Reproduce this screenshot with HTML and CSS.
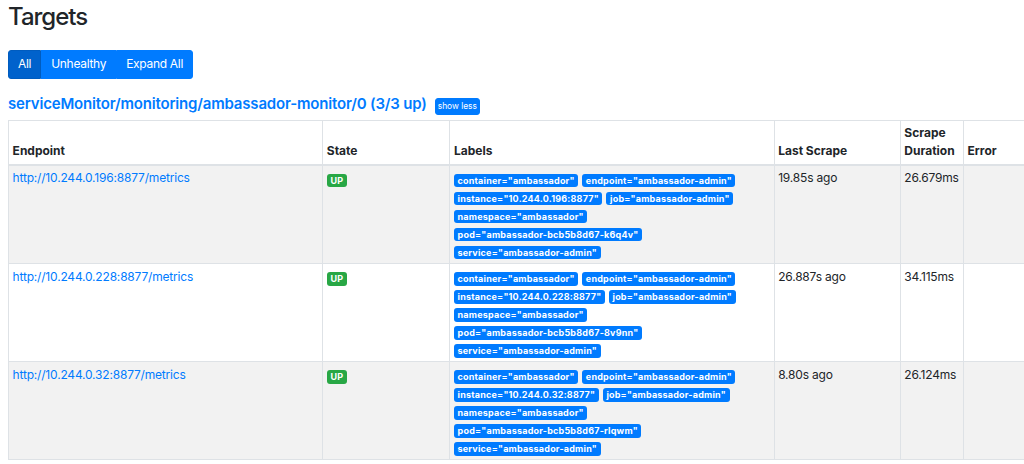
FILE: index.html
```html
<!DOCTYPE html>
<html lang="en">
<head>
<meta charset="utf-8">
<title>Targets</title>
<link rel="stylesheet" href="styles.css">
</head>
<body>
<div class="page">
  <h2 class="page-title">Targets</h2>
  <div class="btn-group">
    <button class="btn active">All</button><button class="btn">Unhealthy</button><button class="btn">Expand All</button>
  </div>
  <h3 class="pool-title"><a class="pool-link" href="#serviceMonitor/monitoring/ambassador-monitor/0">serviceMonitor/monitoring/ambassador-monitor/0 (3/3 up)</a><button class="btn-xs">show less</button></h3>
  <table class="targets">
    <thead>
      <tr>
        <th class="c-endpoint">Endpoint</th>
        <th class="c-state">State</th>
        <th class="c-labels">Labels</th>
        <th class="c-last">Last Scrape</th>
        <th class="c-dur">Scrape Duration</th>
        <th class="c-error">Error</th>
      </tr>
    </thead>
    <tbody>
      <tr>
        <td><a class="endpoint" href="#">http://10.244.0.196:8877/metrics</a></td>
        <td><span class="badge up">UP</span></td>
        <td class="labels-cell"><div class="labels"><span class="badge">container="ambassador"</span><span class="badge">endpoint="ambassador-admin"</span><span class="badge">instance="10.244.0.196:8877"</span><span class="badge">job="ambassador-admin"</span><span class="badge">namespace="ambassador"</span><span class="badge">pod="ambassador-bcb5b8d67-k6q4v"</span><span class="badge">service="ambassador-admin"</span></div></td>
        <td>19.85s ago</td>
        <td>26.679ms</td>
        <td></td>
      </tr>
      <tr>
        <td><a class="endpoint" href="#">http://10.244.0.228:8877/metrics</a></td>
        <td><span class="badge up">UP</span></td>
        <td class="labels-cell"><div class="labels"><span class="badge">container="ambassador"</span><span class="badge">endpoint="ambassador-admin"</span><span class="badge">instance="10.244.0.228:8877"</span><span class="badge">job="ambassador-admin"</span><span class="badge">namespace="ambassador"</span><span class="badge">pod="ambassador-bcb5b8d67-8v9nn"</span><span class="badge">service="ambassador-admin"</span></div></td>
        <td>26.887s ago</td>
        <td>34.115ms</td>
        <td></td>
      </tr>
      <tr>
        <td><a class="endpoint" href="#">http://10.244.0.32:8877/metrics</a></td>
        <td><span class="badge up">UP</span></td>
        <td class="labels-cell"><div class="labels"><span class="badge">container="ambassador"</span><span class="badge">endpoint="ambassador-admin"</span><span class="badge">instance="10.244.0.32:8877"</span><span class="badge">job="ambassador-admin"</span><span class="badge">namespace="ambassador"</span><span class="badge">pod="ambassador-bcb5b8d67-rlqwm"</span><span class="badge">service="ambassador-admin"</span></div></td>
        <td>8.80s ago</td>
        <td>26.124ms</td>
        <td></td>
      </tr>
    </tbody>
  </table>
</div>
</body>
</html>
```
FILE: styles.css
```css
html {
  font-size: 12px;
}

body {
  margin: 0;
  font-family: Inter, "Liberation Sans", Arial, sans-serif;
  font-size: 12px;
  line-height: 1.5;
  color: #212529;
  background: #fff;
}

.page {
  padding: 3px 0 0 8px;
  overflow: hidden;
  height: 461px;
}

.page-title {
  margin: 0 0 18px;
  font-size: 24px;
  font-weight: 500;
  line-height: 1.2;
  letter-spacing: -1px;
}

.btn-group {
  display: inline-flex;
  vertical-align: top;
}

.btn {
  font-family: inherit;
  font-size: 12px;
  line-height: 18px;
  font-weight: 400;
  letter-spacing: -0.3px;
  padding: 4.5px 9px;
  color: #fff;
  background: #007bff;
  border: 1px solid #007bff;
  border-radius: 0;
  margin: 0;
  cursor: pointer;
}

.btn:first-child {
  border-radius: 3px 0 0 3px;
}

.btn:last-child {
  border-radius: 0 3px 3px 0;
}

.btn.active {
  background: #0062cc;
  border-color: #005cbf;
}

.pool-title {
  margin: 16px 0 5px;
  font-size: 15px;
  line-height: 1.2;
  font-weight: 600;
  letter-spacing: -0.18px;
}

.pool-link {
  color: #007bff;
  text-decoration: none;
}

.btn-xs {
  font-family: inherit;
  font-size: 8.4px;
  line-height: 1.5;
  font-weight: 400;
  letter-spacing: 0;
  padding: 1.2px 2px;
  margin: 0 0 0 8px;
  color: #fff;
  background: #007bff;
  border: 1px solid #007bff;
  border-radius: 3px;
  vertical-align: baseline;
}

.targets {
  border-collapse: collapse;
  table-layout: fixed;
  width: 1264px;
}

.targets th,
.targets td {
  padding: 3.6px;
  border: 1px solid #dee2e6;
  vertical-align: top;
  text-align: left;
}

.targets td {
  letter-spacing: -0.19px;
}

.targets thead th {
  vertical-align: bottom;
  border-bottom: 2px solid #dee2e6;
  font-weight: 700;
}

.targets tbody tr:nth-child(odd) {
  background: #f2f2f2;
}

.c-endpoint { width: 306px; }
.c-state { width: 119px; }
.c-labels { width: 316px; }
.c-last { width: 118px; }
.c-dur { width: 55px; }
.c-error { width: 300px; }

.endpoint {
  color: #007bff;
  text-decoration: none;
}

.labels {
  max-width: 300px;
}

.badge {
  display: inline-block;
  vertical-align: bottom;
  padding: 2.4px 3.6px;
  margin-right: 4px;
  font-size: 9px;
  font-weight: 700;
  line-height: 1;
  letter-spacing: 0.2px;
  color: #fff;
  background: #007bff;
  border-radius: 3px;
  white-space: nowrap;
}

.badge.up {
  background: #28a745;
  margin-right: 0;
}
```
